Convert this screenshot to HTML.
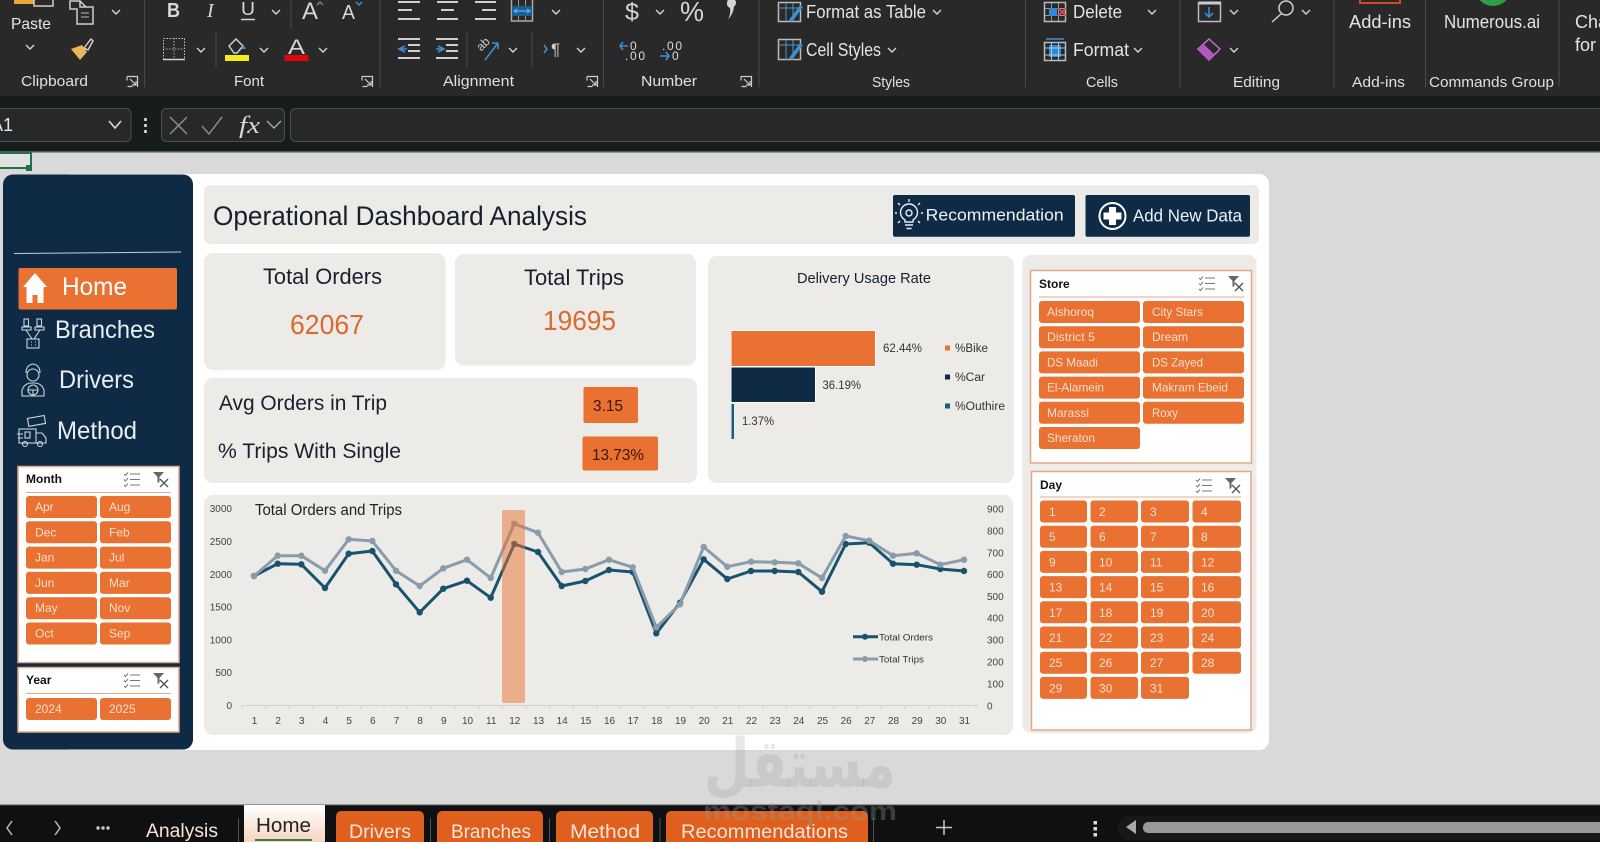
<!DOCTYPE html>
<html lang="en">
<head>
<meta charset="utf-8">
<title>Operational Dashboard Analysis</title>
<style>
html,body{margin:0;padding:0;width:1600px;height:842px;overflow:hidden;background:#d9d9d9}
svg{display:block;font-family:"Liberation Sans",Arial,sans-serif;filter:blur(.3px)}
.r{fill:#e4e4e4;font-size:15px}
.ic{fill:none;stroke:#cfcfcf;stroke-width:1.5}
.ch{fill:none;stroke:#d5d5d5;stroke-width:1.4}
.bl{fill:none;stroke:#3d8fd0;stroke-width:1.6}
.sep{stroke:#4a4a4a;stroke-width:1}
.sb{fill:#e97132}
.st{fill:#fbdfce;font-size:12px}
.sh{fill:#111;font-size:12px;font-weight:bold}
.ax{fill:#444;font-size:10px}
.tb{fill:#fbe3d6;font-size:19px}
</style>
</head>
<body>
<svg width="1600" height="842" viewBox="0 0 1600 842" xmlns="http://www.w3.org/2000/svg">
<defs>
<symbol id="chev" viewBox="0 0 10 6" width="10" height="6" overflow="visible"><path d="M1 1l4 4 4-4" class="ch"/></symbol>
<symbol id="lau" viewBox="0 0 11 11" width="11" height="11" overflow="visible"><path d="M0 .5h10.500v10.500M0 .5v4M.5 10.500h5M3 3l6 6M9 5v4H5" fill="none" stroke="#cfcfcf" stroke-width="1.2"/></symbol>
<symbol id="slic" viewBox="0 0 46 16" width="46" height="16" overflow="visible">
<path d="M6 2h10M6 7.500h10M6 13h10M0 2l1.500 1.500L4 .5M0 7.500l1.500 1.500L4 6M0 13l1.500 1.500L4 11.500" fill="none" stroke="#777" stroke-width="1"/>
<path d="M29 0h11l-4.500 5v5l-2 1V5z" fill="#666"/>
<path d="M36 7l8 8M44 7l-8 8" stroke="#555" stroke-width="1.400"/>
</symbol>
<marker id="mo" markerUnits="userSpaceOnUse" markerWidth="8" markerHeight="8" refX="4" refY="4"><circle cx="4" cy="4" r="3.200" fill="#18536e"/></marker>
<marker id="mt" markerUnits="userSpaceOnUse" markerWidth="8" markerHeight="8" refX="4" refY="4"><circle cx="4" cy="4" r="3.200" fill="#8a9bab"/></marker>
<linearGradient id="hm" x1="0" y1="0" x2="0" y2="1"><stop offset="0" stop-color="#fff"/><stop offset="1" stop-color="#f6d5c0"/></linearGradient>
</defs>

<!-- sheet background -->
<rect width="1600" height="842" fill="#d9d9d9"/>

<!-- ribbon -->
<rect width="1600" height="96" fill="#292929"/>
<rect y="96" width="1600" height="56" fill="#171c1d"/>
<rect y="151" width="1600" height="1.500" fill="#555"/>

<g class="sep">
<path d="M144.500 0v87M380 0v87M603.500 0v87M759 0v87M1025.500 0v87M1180 0v87M1334 0v87M1425.500 0v87M1559 0v87M291 0v29M216 32v35M467 32v35M532 32v35"/>
</g>

<!-- clipboard -->
<rect x="14" y="-6" width="20" height="10" fill="#eba83a"/>
<rect x="34" y="-6" width="19" height="12" fill="none" stroke="#cfcfcf" stroke-width="1.500"/>
<text x="11" y="29" font-size="16" fill="#e6e6e6" textLength="40" lengthAdjust="spacingAndGlyphs">Paste</text>
<use href="#chev" x="25" y="44"/>
<path d="M70 1h10l6 6h7v17H77V9h-7z M80 1v6h6" class="ic"/>
<path d="M81 13h8M81 17h8" stroke="#bbb" stroke-width="1"/>
<use href="#chev" x="111" y="9"/>
<path d="M84 48l7-9 2 2-5 9z" fill="none" stroke="#d8d8d8" stroke-width="1.400"/>
<path d="M71 49l11-4 5 7-7 8z" fill="#eab45a"/>
<text x="21" y="86" font-size="15" fill="#e0e0e0" textLength="67" lengthAdjust="spacingAndGlyphs">Clipboard</text>
<use href="#lau" x="127" y="76"/>

<!-- font -->
<text x="167" y="17" font-size="20" font-weight="bold" fill="#d8d8d8" textLength="13" lengthAdjust="spacingAndGlyphs">B</text>
<text x="207" y="17" font-size="20" font-style="italic" font-family="Liberation Serif" fill="#d8d8d8">I</text>
<text x="241" y="15" font-size="18" fill="#d8d8d8" textLength="14" lengthAdjust="spacingAndGlyphs">U</text>
<path d="M241 19.500h14" stroke="#d8d8d8" stroke-width="1.500"/>
<use href="#chev" x="271" y="9"/>
<text x="302" y="19" font-size="24" fill="#d8d8d8" textLength="16" lengthAdjust="spacingAndGlyphs">A</text>
<path d="M317 5l3-3 3 3" fill="none" stroke="#3d8fd0" stroke-width="1.500"/>
<text x="342" y="19" font-size="20" fill="#d8d8d8" textLength="13" lengthAdjust="spacingAndGlyphs">A</text>
<path d="M356 2l3 3 3-3" fill="none" stroke="#3d8fd0" stroke-width="1.500"/>
<rect x="163.500" y="38.500" width="21" height="21" fill="none" stroke="#c8c8c8" stroke-width="1" stroke-dasharray="1.500 1.500"/>
<path d="M174 38v21M163 49h21" stroke="#aaa" stroke-width="1" stroke-dasharray="1.500 1.500"/>
<path d="M163 59.500h22" stroke="#d5d5d5" stroke-width="1.500"/>
<use href="#chev" x="196" y="47"/>
<path d="M229 46l7-7 7 7-6 7h-3z" class="ic"/>
<path d="M243 44l3 5h-4z" fill="#3d8fd0"/>
<rect x="225" y="55" width="24" height="6" fill="#f4ec1b"/>
<use href="#chev" x="259" y="47"/>
<text x="288" y="54" font-size="21" fill="#d8d8d8" textLength="17" lengthAdjust="spacingAndGlyphs">A</text>
<rect x="284.500" y="55" width="24" height="6" fill="#e0060e"/>
<use href="#chev" x="318" y="47"/>
<text x="234" y="86" font-size="15" fill="#e0e0e0" textLength="30" lengthAdjust="spacingAndGlyphs">Font</text>
<use href="#lau" x="362" y="76"/>

<!-- alignment -->
<g stroke="#cfcfcf" stroke-width="2">
<path d="M398 2h22M398 10h14M398 19h22"/>
<path d="M437 2h21M441 10h13M437 19h21"/>
<path d="M475 2h21M482 10h14M475 19h21"/>
<path d="M398 39h22M408 45h12M408 51h12M398 58h22"/>
<path d="M436 39h22M446 45h12M446 51h12M436 58h22"/>
</g>
<rect x="511.500" y="-1" width="21" height="22" fill="none" stroke="#aaa" stroke-width="1.500"/>
<path d="M518.500 0v6M525.500 0v6M518.500 16v5M525.500 16v5" stroke="#999" stroke-width="1"/>
<rect x="512" y="6" width="20" height="10" fill="#1c5e8f"/>
<path d="M515 11h14M517 9l-3 2 3 2M527 9l3 2-3 2" fill="none" stroke="#5ab0ea" stroke-width="1.200"/>
<use href="#chev" x="551" y="9"/>
<path d="M405 46l-6 3 6 3M399 49h8" class="bl"/>
<path d="M438 46l6 3-6 3M436 49h8" class="bl"/>
<text x="478" y="48" font-size="12" fill="#cfcfcf" transform="rotate(-45 484 46)">ab</text>
<path d="M485 60l13-17M498 43h-6M498 43v6" class="bl"/>
<use href="#chev" x="508" y="47"/>
<path d="M544 45l3 4-3 4" class="bl"/>
<text x="551" y="55" font-size="17" fill="#cfcfcf">¶</text>
<use href="#chev" x="576" y="47"/>
<text x="443" y="86" font-size="15" fill="#e0e0e0" textLength="71" lengthAdjust="spacingAndGlyphs">Alignment</text>
<use href="#lau" x="587" y="76"/>

<!-- number -->
<text x="625" y="20" font-size="24" fill="#d5d5d5" textLength="14" lengthAdjust="spacingAndGlyphs">$</text>
<use href="#chev" x="655" y="9"/>
<text x="680" y="21" font-size="28" fill="#d5d5d5" textLength="24" lengthAdjust="spacingAndGlyphs">%</text>
<path d="M727 3a4.500 4.500 0 1 1 7 3.500q-.5 7-6 13q3-6 2-11.500a4.500 4.500 0 0 1-3-5z" fill="#d5d5d5"/>
<path d="M628 46h-8M623 42l-3 4 3 4" class="bl"/>
<text x="630" y="50" font-size="12" fill="#ddd">0</text>
<text x="625" y="60" font-size="12" fill="#ddd" textLength="20">.00</text>
<text x="662" y="50" font-size="12" fill="#ddd" textLength="20">.00</text>
<path d="M660 56h9M666 52l3 4-3 4" class="bl"/>
<text x="672" y="60" font-size="12" fill="#ddd">0</text>
<text x="641" y="86" font-size="15" fill="#e0e0e0" textLength="56" lengthAdjust="spacingAndGlyphs">Number</text>
<use href="#lau" x="741" y="76"/>

<!-- styles -->
<rect x="778.500" y="2.500" width="22" height="19" fill="none" stroke="#bbb" stroke-width="1.500"/>
<path d="M778 8h22M786 3v18M793 3v18" stroke="#4f96c9" stroke-width="1"/>
<path d="M789 20l11-15 3 2-11 15z" fill="#3d8fd0"/>
<rect x="778.500" y="39.500" width="22" height="20" fill="none" stroke="#bbb" stroke-width="1.500"/>
<path d="M778 45h22M786 40v20M793 40v20" stroke="#4f96c9" stroke-width="1"/>
<path d="M789 58l11-15 3 2-11 15z" fill="#3d8fd0"/>
<text x="806" y="18" class="r" font-size="17" textLength="120" lengthAdjust="spacingAndGlyphs" style="font-size:18px">Format as Table</text>
<use href="#chev" x="932" y="9"/>
<text x="806" y="56" class="r" textLength="75" lengthAdjust="spacingAndGlyphs" style="font-size:18px">Cell Styles</text>
<use href="#chev" x="887" y="47"/>
<text x="872" y="87" font-size="15" fill="#e0e0e0" textLength="38" lengthAdjust="spacingAndGlyphs">Styles</text>

<!-- cells -->
<rect x="1044.500" y="2.500" width="21" height="19" fill="none" stroke="#bbb" stroke-width="1.500"/>
<path d="M1051.500 3v18M1058.500 3v18M1045 8.500h20M1045 15.500h20" stroke="#999" stroke-width="1"/>
<rect x="1049" y="8" width="8" height="8" fill="#2d8ad8"/>
<path d="M1058 8l8 8M1066 8l-8 8" stroke="#e14b4b" stroke-width="1.600"/>
<text x="1073" y="18" class="r" textLength="49" lengthAdjust="spacingAndGlyphs" style="font-size:18px">Delete</text>
<use href="#chev" x="1147" y="9"/>
<rect x="1044.500" y="42.500" width="21" height="18" fill="none" stroke="#bbb" stroke-width="1.500"/>
<rect x="1049" y="45" width="12" height="12" fill="#2d8ad8"/>
<path d="M1051.500 43v17M1058.500 43v17M1045 48h20M1045 55h20" stroke="#a9c8e4" stroke-width="1"/>
<path d="M1046 39h18" stroke="#3d8fd0" stroke-width="1.500"/>
<text x="1073" y="56" class="r" textLength="56" lengthAdjust="spacingAndGlyphs" style="font-size:18px">Format</text>
<use href="#chev" x="1133" y="47"/>
<text x="1086" y="87" font-size="15" fill="#e0e0e0" textLength="32" lengthAdjust="spacingAndGlyphs">Cells</text>

<!-- editing -->
<rect x="1198.500" y="2.500" width="22" height="19" fill="none" stroke="#bbb" stroke-width="1.500"/>
<path d="M1199 3h22" stroke="#ccc" stroke-width="3"/>
<path d="M1209 7v10M1205 13l4 4 4-4" class="bl"/>
<use href="#chev" x="1229" y="9"/>
<circle cx="1286" cy="8" r="7" class="ic"/>
<path d="M1281 14l-9 8" class="ic"/>
<use href="#chev" x="1301" y="9"/>
<path d="M1209 39l11 10-11 11-11-11z" fill="none" stroke="#c86dd6" stroke-width="1.500"/>
<path d="M1198 49l5.500-5 11 10.500-5.500 5.500z" fill="#b754c4"/>
<use href="#chev" x="1229" y="47"/>
<text x="1233" y="87" font-size="15" fill="#e0e0e0" textLength="47" lengthAdjust="spacingAndGlyphs">Editing</text>

<!-- add-ins etc -->
<rect x="1360" y="-6" width="40" height="9" fill="none" stroke="#d24a26" stroke-width="2"/>
<text x="1349" y="28" class="r" textLength="62" lengthAdjust="spacingAndGlyphs" style="font-size:18px">Add-ins</text>
<text x="1352" y="87" font-size="15" fill="#e0e0e0" textLength="53" lengthAdjust="spacingAndGlyphs">Add-ins</text>
<circle cx="1493" cy="-12" r="18" fill="#2e9e48"/>
<text x="1444" y="28" class="r" textLength="96" lengthAdjust="spacingAndGlyphs" style="font-size:18px">Numerous.ai</text>
<text x="1429" y="87" font-size="15" fill="#e0e0e0" textLength="125" lengthAdjust="spacingAndGlyphs">Commands Group</text>
<text x="1575" y="28" class="r" style="font-size:18px">Cha</text>
<text x="1575" y="51" class="r" style="font-size:18px">for</text>

<!-- formula bar -->
<rect x="-10" y="108.500" width="141" height="33" rx="5" fill="#262829" stroke="#4c4e4f"/>
<text x="-9" y="131" font-size="18" fill="#e6e6e6">A1</text>
<path d="M109 121l6 7 6-7" class="ch" style="stroke-width:1.700"/>
<path d="M145.500 118v3M145.500 124v3M145.500 130v3" stroke="#ddd" stroke-width="2.600"/>
<rect x="161.500" y="108.500" width="123" height="33" rx="5" fill="#262829" stroke="#4c4e4f"/>
<path d="M170 117l17 17M187 117l-17 17" stroke="#8a8a8a" stroke-width="1.500"/>
<path d="M202 126l7 8 13-17" fill="none" stroke="#8a8a8a" stroke-width="1.500"/>
<text x="239" y="133" font-size="24" font-style="italic" font-family="Liberation Serif" fill="#d8d8d8" textLength="21" lengthAdjust="spacingAndGlyphs">fx</text>
<path d="M267 121l7 7 7-7" fill="none" stroke="#aaa" stroke-width="1.400"/>
<rect x="290.500" y="108.500" width="1320" height="33" rx="5" fill="#262829" stroke="#4c4e4f"/>

<!-- active cell -->
<rect x="-4" y="153" width="35" height="15" fill="#e2e2e2" stroke="#24704a" stroke-width="2"/>
<rect x="26" y="165" width="6" height="6" fill="#24704a"/>

<!-- white panel -->
<rect x="60" y="174" width="1209" height="576" rx="10" fill="#fff"/>

<!-- sidebar -->
<rect x="3" y="174.500" width="190" height="575" rx="10" fill="#0f2a45"/>
<path d="M14 253.500L181 252" stroke="#c9ced4" stroke-width="1"/>
<rect x="18.500" y="268" width="158.500" height="41.500" rx="2" fill="#e97132"/>
<path d="M35 273l12 14h-3.500v16h-6v-8h-5v8h-6v-16H23z" fill="#fff"/>
<text x="62" y="295" font-size="25" fill="#fff" textLength="65" lengthAdjust="spacingAndGlyphs">Home</text>
<text x="55" y="338" font-size="25" fill="#e8eef3" textLength="100" lengthAdjust="spacingAndGlyphs">Branches</text>
<text x="59" y="388" font-size="25" fill="#e8eef3" textLength="75" lengthAdjust="spacingAndGlyphs">Drivers</text>
<text x="57" y="439" font-size="25" fill="#e8eef3" textLength="80" lengthAdjust="spacingAndGlyphs">Method</text>
<!-- branches icon -->
<g fill="none" stroke="#cfd6dd" stroke-width="1.100">
<rect x="24" y="319" width="4.500" height="7"/><rect x="37" y="319" width="4.500" height="7"/>
<path d="M22 327h9v3h-9zM35 327h9v3h-9zM26 330l6 9M40 330l-6 9"/>
<rect x="27" y="339" width="12" height="9"/>
<path d="M31 342h1M35 342h1M31 345h1M35 345h1"/>
<!-- drivers icon -->
<circle cx="33" cy="375" r="6"/>
<path d="M26 373q0-8 7-9 7 1 7 9"/>
<path d="M22 396v-6q2-6 8-7h6q6 1 8 7v6z"/>
<circle cx="33" cy="390" r="5"/>
<path d="M28 390h10M33 390v5"/>
<!-- method icon -->
<rect x="28" y="417" width="17" height="8" transform="rotate(-10 36 421)"/>
<rect x="19" y="429" width="17" height="14"/>
<path d="M36 433h6l4 5v5H36M17 434h6M18 438h5"/>
<circle cx="25" cy="444" r="2.500"/><circle cx="40" cy="444" r="2.500"/>
<rect x="25" y="432" width="5" height="6"/>
</g>

<!-- month slicer -->
<rect x="18" y="466.500" width="161" height="196" fill="#fff" stroke="#e4a786" stroke-width="1.500"/>
<text x="26" y="483" class="sh">Month</text>
<use href="#slic" x="124" y="472"/>
<path d="M26 492.500h145" stroke="#e9a985" stroke-width="1"/>
<g class="sb">
<rect x="26" y="496" width="71" height="22" rx="3"/><rect x="100" y="496" width="71" height="22" rx="3"/>
<rect x="26" y="521.300" width="71" height="22" rx="3"/><rect x="100" y="521.300" width="71" height="22" rx="3"/>
<rect x="26" y="546.600" width="71" height="22" rx="3"/><rect x="100" y="546.600" width="71" height="22" rx="3"/>
<rect x="26" y="571.900" width="71" height="22" rx="3"/><rect x="100" y="571.900" width="71" height="22" rx="3"/>
<rect x="26" y="597.200" width="71" height="22" rx="3"/><rect x="100" y="597.200" width="71" height="22" rx="3"/>
<rect x="26" y="622.500" width="71" height="22" rx="3"/><rect x="100" y="622.500" width="71" height="22" rx="3"/>
</g>
<g class="st">
<text x="35" y="511">Apr</text><text x="109" y="511">Aug</text>
<text x="35" y="536.300">Dec</text><text x="109" y="536.300">Feb</text>
<text x="35" y="561.600">Jan</text><text x="109" y="561.600">Jul</text>
<text x="35" y="586.900">Jun</text><text x="109" y="586.900">Mar</text>
<text x="35" y="612.200">May</text><text x="109" y="612.200">Nov</text>
<text x="35" y="637.500">Oct</text><text x="109" y="637.500">Sep</text>
</g>

<!-- year slicer -->
<rect x="18" y="667.500" width="161" height="64.500" fill="#fff" stroke="#e4a786" stroke-width="1.500"/>
<text x="26" y="684" class="sh">Year</text>
<use href="#slic" x="124" y="673"/>
<path d="M26 693.500h145" stroke="#e9a985" stroke-width="1"/>
<rect x="26" y="698" width="71" height="22" rx="3" class="sb"/><rect x="100" y="698" width="71" height="22" rx="3" class="sb"/>
<text x="35" y="713" class="st">2024</text><text x="109" y="713" class="st">2025</text>

<!-- title bar -->
<rect x="204" y="185" width="1055" height="59" rx="6" fill="#edebe8"/>
<text x="213" y="225" font-size="27" fill="#17202e" textLength="374" lengthAdjust="spacingAndGlyphs">Operational Dashboard Analysis</text>
<rect x="893" y="195" width="182" height="41.700" rx="2" fill="#0f2a45"/>
<rect x="1085.500" y="195" width="164.500" height="41.700" rx="2" fill="#0f2a45"/>
<text x="925.700" y="220.700" font-size="17" fill="#eef2f5" textLength="138" lengthAdjust="spacingAndGlyphs">Recommendation</text>
<text x="1133" y="221.500" font-size="17.500" fill="#eef2f5" textLength="109" lengthAdjust="spacingAndGlyphs">Add New Data</text>
<circle cx="1112.500" cy="216" r="13" fill="#0f2a45" stroke="#fff" stroke-width="2"/>
<path d="M1109 207h7v5.500h5.500v7H1116v5.500h-7v-5.500h-5.500v-7h5.500z" fill="#fff"/>
<!-- bulb -->
<g fill="none" stroke="#e8edf2" stroke-width="1.400">
<path d="M905 222v-2q-4.500-3-4.500-7.500a8.500 8.500 0 0 1 17 0q0 4.500-4.500 7.500v2z"/>
<circle cx="909" cy="213" r="3"/>
<path d="M905 225h8M906.500 228.500h5M909 199v3M898 203l2 2M920 203l-2 2M895 213h2M921 213h2M898 223l2-2M920 223l-2-2"/>
</g>

<!-- total orders -->
<rect x="204" y="253" width="241.600" height="117" rx="9" fill="#edebe8"/>
<text x="263" y="284" font-size="22" fill="#17202e" textLength="119" lengthAdjust="spacingAndGlyphs">Total Orders</text>
<text x="290" y="334" font-size="28" fill="#d96a31" textLength="74" lengthAdjust="spacingAndGlyphs">62067</text>
<!-- total trips -->
<rect x="455" y="254" width="241" height="111.500" rx="9" fill="#edebe8"/>
<text x="524" y="285" font-size="22" fill="#17202e" textLength="100" lengthAdjust="spacingAndGlyphs">Total Trips</text>
<text x="543" y="330" font-size="28" fill="#d96a31" textLength="73" lengthAdjust="spacingAndGlyphs">19695</text>
<!-- avg card -->
<rect x="204" y="378" width="493" height="105" rx="9" fill="#edebe8"/>
<text x="219" y="410" font-size="21" fill="#17202e" textLength="168" lengthAdjust="spacingAndGlyphs">Avg Orders in Trip</text>
<text x="218" y="458" font-size="21" fill="#17202e" textLength="183" lengthAdjust="spacingAndGlyphs">% Trips With Single</text>
<rect x="583.500" y="387" width="54.500" height="36" rx="2" fill="#e97132"/>
<text x="593" y="411" font-size="15.500" fill="#3a1606" textLength="30" lengthAdjust="spacingAndGlyphs">3.15</text>
<rect x="582.500" y="436.500" width="75.500" height="34" rx="2" fill="#e97132"/>
<text x="592" y="460" font-size="15.500" fill="#3a1606" textLength="52" lengthAdjust="spacingAndGlyphs">13.73%</text>

<!-- delivery card -->
<rect x="708" y="256" width="306" height="227" rx="9" fill="#edebe8"/>
<text x="797" y="283" font-size="14.500" fill="#17202e" textLength="134" lengthAdjust="spacingAndGlyphs">Delivery Usage Rate</text>
<rect x="731" y="330" width="145" height="37" fill="#fff"/>
<rect x="731" y="366.500" width="85" height="36.500" fill="#fff"/>
<rect x="731.500" y="331" width="143.500" height="35" fill="#e97132"/>
<rect x="731.500" y="367.500" width="83.500" height="34.500" fill="#0f2a45"/>
<rect x="731.500" y="404" width="2.500" height="35" fill="#156082"/>
<g font-size="11.500" fill="#333">
<text x="883" y="352" textLength="39" lengthAdjust="spacingAndGlyphs">62.44%</text>
<text x="822.500" y="389" textLength="38.500" lengthAdjust="spacingAndGlyphs">36.19%</text>
<text x="742" y="425" textLength="32" lengthAdjust="spacingAndGlyphs">1.37%</text>
<text x="955" y="352" textLength="33" lengthAdjust="spacingAndGlyphs">%Bike</text>
<text x="955" y="381" textLength="30" lengthAdjust="spacingAndGlyphs">%Car</text>
<text x="955" y="410" textLength="50" lengthAdjust="spacingAndGlyphs">%Outhire</text>
</g>
<rect x="945" y="345.500" width="5" height="5" fill="#e97132"/>
<rect x="945" y="374.500" width="5" height="5" fill="#0f2a45"/>
<rect x="945" y="403.500" width="5" height="5" fill="#156082"/>

<!-- slicer panel -->
<rect x="1022.500" y="255" width="234" height="478" rx="8" fill="#edebe8"/>
<!-- store -->
<rect x="1030.500" y="270.500" width="221" height="192.500" fill="#fff" stroke="#e4a786" stroke-width="1.500"/>
<text x="1039" y="288" class="sh">Store</text>
<use href="#slic" x="1199" y="276"/>
<path d="M1039 297h205" stroke="#e9a985" stroke-width="1"/>
<g class="sb">
<rect x="1039" y="301" width="101" height="22" rx="3"/><rect x="1143" y="301" width="101" height="22" rx="3"/>
<rect x="1039" y="326.200" width="101" height="22" rx="3"/><rect x="1143" y="326.200" width="101" height="22" rx="3"/>
<rect x="1039" y="351.400" width="101" height="22" rx="3"/><rect x="1143" y="351.400" width="101" height="22" rx="3"/>
<rect x="1039" y="376.600" width="101" height="22" rx="3"/><rect x="1143" y="376.600" width="101" height="22" rx="3"/>
<rect x="1039" y="401.800" width="101" height="22" rx="3"/><rect x="1143" y="401.800" width="101" height="22" rx="3"/>
<rect x="1039" y="427" width="101" height="22" rx="3"/>
</g>
<g class="st">
<text x="1047" y="316" textLength="47" lengthAdjust="spacingAndGlyphs">Alshoroq</text><text x="1152" y="316" textLength="51" lengthAdjust="spacingAndGlyphs">City Stars</text>
<text x="1047" y="341.200" textLength="48" lengthAdjust="spacingAndGlyphs">District 5</text><text x="1152" y="341.200" textLength="36" lengthAdjust="spacingAndGlyphs">Dream</text>
<text x="1047" y="366.400" textLength="51" lengthAdjust="spacingAndGlyphs">DS Maadi</text><text x="1152" y="366.400" textLength="51" lengthAdjust="spacingAndGlyphs">DS Zayed</text>
<text x="1047" y="391.600" textLength="57" lengthAdjust="spacingAndGlyphs">El-Alamein</text><text x="1152" y="391.600" textLength="76" lengthAdjust="spacingAndGlyphs">Makram Ebeid</text>
<text x="1047" y="416.800" textLength="42" lengthAdjust="spacingAndGlyphs">Marassi</text><text x="1152" y="416.800" textLength="26" lengthAdjust="spacingAndGlyphs">Roxy</text>
<text x="1047" y="442" textLength="48" lengthAdjust="spacingAndGlyphs">Sheraton</text>
</g>
<!-- day -->
<rect x="1031.500" y="471.500" width="219.500" height="258.500" fill="#fff" stroke="#e4a786" stroke-width="1.500"/>
<text x="1040" y="489" class="sh">Day</text>
<use href="#slic" x="1196" y="478"/>
<path d="M1040 497h201" stroke="#e9a985" stroke-width="1"/>
<g class="sb">
<rect x="1040" y="500.500" width="47" height="22" rx="3"/><rect x="1090.500" y="500.500" width="47.500" height="22" rx="3"/><rect x="1141" y="500.500" width="48" height="22" rx="3"/><rect x="1192.500" y="500.500" width="48.500" height="22" rx="3"/>
<rect x="1040" y="525.700" width="47" height="22" rx="3"/><rect x="1090.500" y="525.700" width="47.500" height="22" rx="3"/><rect x="1141" y="525.700" width="48" height="22" rx="3"/><rect x="1192.500" y="525.700" width="48.500" height="22" rx="3"/>
<rect x="1040" y="550.900" width="47" height="22" rx="3"/><rect x="1090.500" y="550.900" width="47.500" height="22" rx="3"/><rect x="1141" y="550.900" width="48" height="22" rx="3"/><rect x="1192.500" y="550.900" width="48.500" height="22" rx="3"/>
<rect x="1040" y="576.100" width="47" height="22" rx="3"/><rect x="1090.500" y="576.100" width="47.500" height="22" rx="3"/><rect x="1141" y="576.100" width="48" height="22" rx="3"/><rect x="1192.500" y="576.100" width="48.500" height="22" rx="3"/>
<rect x="1040" y="601.300" width="47" height="22" rx="3"/><rect x="1090.500" y="601.300" width="47.500" height="22" rx="3"/><rect x="1141" y="601.300" width="48" height="22" rx="3"/><rect x="1192.500" y="601.300" width="48.500" height="22" rx="3"/>
<rect x="1040" y="626.500" width="47" height="22" rx="3"/><rect x="1090.500" y="626.500" width="47.500" height="22" rx="3"/><rect x="1141" y="626.500" width="48" height="22" rx="3"/><rect x="1192.500" y="626.500" width="48.500" height="22" rx="3"/>
<rect x="1040" y="651.700" width="47" height="22" rx="3"/><rect x="1090.500" y="651.700" width="47.500" height="22" rx="3"/><rect x="1141" y="651.700" width="48" height="22" rx="3"/><rect x="1192.500" y="651.700" width="48.500" height="22" rx="3"/>
<rect x="1040" y="676.900" width="47" height="22" rx="3"/><rect x="1090.500" y="676.900" width="47.500" height="22" rx="3"/><rect x="1141" y="676.900" width="48" height="22" rx="3"/>
</g>
<g class="st">
<text x="1049" y="516">1</text><text x="1099" y="516">2</text><text x="1150" y="516">3</text><text x="1201" y="516">4</text>
<text x="1049" y="541.200">5</text><text x="1099" y="541.200">6</text><text x="1150" y="541.200">7</text><text x="1201" y="541.200">8</text>
<text x="1049" y="566.400">9</text><text x="1099" y="566.400">10</text><text x="1150" y="566.400">11</text><text x="1201" y="566.400">12</text>
<text x="1049" y="591.600">13</text><text x="1099" y="591.600">14</text><text x="1150" y="591.600">15</text><text x="1201" y="591.600">16</text>
<text x="1049" y="616.800">17</text><text x="1099" y="616.800">18</text><text x="1150" y="616.800">19</text><text x="1201" y="616.800">20</text>
<text x="1049" y="642">21</text><text x="1099" y="642">22</text><text x="1150" y="642">23</text><text x="1201" y="642">24</text>
<text x="1049" y="667.200">25</text><text x="1099" y="667.200">26</text><text x="1150" y="667.200">27</text><text x="1201" y="667.200">28</text>
<text x="1049" y="692.400">29</text><text x="1099" y="692.400">30</text><text x="1150" y="692.400">31</text>
</g>

<!-- chart card -->
<rect x="204" y="495" width="809" height="240" rx="9" fill="#edebe8"/>
<text x="255" y="515" font-size="15.500" fill="#222" textLength="147" lengthAdjust="spacingAndGlyphs">Total Orders and Trips</text>
<g class="ax" text-anchor="end">
<text x="232" y="512">3000</text><text x="232" y="545">2500</text><text x="232" y="577.800">2000</text><text x="232" y="610.600">1500</text><text x="232" y="643.400">1000</text><text x="232" y="676.200">500</text><text x="232" y="709">0</text>
</g>
<g class="ax">
<text x="987" y="512.500">900</text><text x="987" y="534.500">800</text><text x="987" y="556.500">700</text><text x="987" y="578">600</text><text x="987" y="600">500</text><text x="987" y="621.500">400</text><text x="987" y="643.500">300</text><text x="987" y="665.500">200</text><text x="987" y="687.500">100</text><text x="987" y="709.500">0</text>
</g>
<path d="M242 705.500h736" stroke="#d2d0cd" stroke-width="1"/>
<path d="M242 705v4M265.700 705v4M289.300 705v4M313 705v4M336.700 705v4M360.300 705v4M384 705v4M407.700 705v4M431.300 705v4M455 705v4M478.700 705v4M502.300 705v4M526 705v4M549.700 705v4M573.300 705v4M597 705v4M620.700 705v4M644.300 705v4M668 705v4M691.700 705v4M715.300 705v4M739 705v4M762.700 705v4M786.300 705v4M810 705v4M833.700 705v4M857.300 705v4M881 705v4M904.700 705v4M928.300 705v4M952 705v4M976 705v4" stroke="#d2d0cd" stroke-width="1"/>
<g class="ax" text-anchor="middle">
<text x="254.500" y="724">1</text><text x="278.200" y="724">2</text><text x="301.800" y="724">3</text><text x="325.500" y="724">4</text><text x="349.200" y="724">5</text><text x="372.800" y="724">6</text><text x="396.500" y="724">7</text><text x="420.200" y="724">8</text><text x="443.800" y="724">9</text><text x="467.500" y="724">10</text><text x="491.200" y="724">11</text><text x="514.800" y="724">12</text><text x="538.500" y="724">13</text><text x="562.200" y="724">14</text><text x="585.800" y="724">15</text><text x="609.500" y="724">16</text><text x="633.200" y="724">17</text><text x="656.800" y="724">18</text><text x="680.500" y="724">19</text><text x="704.200" y="724">20</text><text x="727.800" y="724">21</text><text x="751.500" y="724">22</text><text x="775.200" y="724">23</text><text x="798.800" y="724">24</text><text x="822.500" y="724">25</text><text x="846.200" y="724">26</text><text x="869.800" y="724">27</text><text x="893.500" y="724">28</text><text x="917.200" y="724">29</text><text x="940.800" y="724">30</text><text x="964.500" y="724">31</text>
</g>
<polyline fill="none" stroke="#18536e" stroke-width="3" stroke-linejoin="round" marker-start="url(#mo)" marker-mid="url(#mo)" marker-end="url(#mo)"
points="254,576 277.700,563.700 301.300,564.300 325,588 348.700,553.700 372.300,551 396,584.300 419.700,612.300 443.300,588.700 467,580.700 490.700,597.700 514.300,544 538,552 561.700,586 585.300,581 609,570 632.700,572 656.300,633.300 680,602.700 703.700,559.300 727.300,579 751,571 774.700,571 798.300,572 822,591.700 845.700,544 869.300,542.700 893,563.700 916.700,564.700 940.300,569 964,571"/>
<polyline fill="none" stroke="#8a9bab" stroke-width="3" stroke-linejoin="round" marker-start="url(#mt)" marker-mid="url(#mt)" marker-end="url(#mt)"
points="254,576 277.700,555.700 301.300,555.700 325,570.700 348.700,539.300 372.300,541 396,570.700 419.700,586 443.300,568.300 467,559.700 490.700,578 514.300,523.700 538,532.700 561.700,572 585.300,569 609,559.700 632.700,567.300 656.300,627.300 680,604.300 703.700,547 727.300,566.700 751,561.700 774.700,562.300 798.300,563.300 822,578 845.700,536 869.300,540.700 893,555.700 916.700,553.300 940.300,564.700 964,559.700"/>
<rect x="502" y="510" width="23" height="193" rx="1.500" fill="#e97132" fill-opacity=".5"/>
<path d="M853 636.700h25" stroke="#18536e" stroke-width="3"/><circle cx="865" cy="636.700" r="3" fill="#18536e"/>
<path d="M853 659h25" stroke="#8a9bab" stroke-width="3"/><circle cx="865" cy="659" r="3" fill="#8a9bab"/>
<text x="879" y="640.500" font-size="9.500" fill="#333" textLength="54" lengthAdjust="spacingAndGlyphs">Total Orders</text>
<text x="879" y="662.500" font-size="9.500" fill="#333" textLength="45" lengthAdjust="spacingAndGlyphs">Total Trips</text>

<!-- bottom bar -->
<rect y="805" width="1600" height="37" fill="#0f1011"/>
<rect y="804.500" width="1600" height="1" fill="#555"/>
<path d="M12 821l-5 7 5 7M55 821l5 7-5 7" fill="none" stroke="#bdbdbd" stroke-width="1.500"/>
<circle cx="98" cy="828" r="1.700" fill="#ccc"/><circle cx="103" cy="828" r="1.700" fill="#ccc"/><circle cx="108" cy="828" r="1.700" fill="#ccc"/>
<text x="146" y="837" class="tb" textLength="72" lengthAdjust="spacingAndGlyphs">Analysis</text>
<path d="M238.500 818v24" stroke="#555"/>
<rect x="244" y="805" width="81" height="37" fill="url(#hm)"/>
<text x="256" y="832" font-size="20" fill="#222" textLength="55" lengthAdjust="spacingAndGlyphs">Home</text>
<rect x="255" y="839" width="57" height="2" fill="#3f7a44"/>
<rect x="336" y="811" width="88" height="36" rx="5" fill="#de5f1e"/>
<text x="349" y="838" class="tb" textLength="62" lengthAdjust="spacingAndGlyphs">Drivers</text>
<path d="M430.500 818v24M549.500 818v24M660 818v24M873.500 818v24" stroke="#555"/>
<rect x="437" y="811" width="106" height="36" rx="5" fill="#de5f1e"/>
<text x="451" y="838" class="tb" textLength="80" lengthAdjust="spacingAndGlyphs">Branches</text>
<rect x="556" y="811" width="97" height="36" rx="5" fill="#de5f1e"/>
<text x="570" y="838" class="tb" textLength="70" lengthAdjust="spacingAndGlyphs">Method</text>
<rect x="666" y="811" width="202" height="36" rx="5" fill="#de5f1e"/>
<text x="681" y="838" class="tb" textLength="167" lengthAdjust="spacingAndGlyphs">Recommendations</text>
<path d="M944 820v15M936 827.500h16" stroke="#c8c8c8" stroke-width="1.500"/>
<rect x="1093.500" y="821" width="3.500" height="3.500" fill="#ddd"/><rect x="1093.500" y="827" width="3.500" height="3.500" fill="#ddd"/><rect x="1093.500" y="833" width="3.500" height="3.500" fill="#ddd"/>
<rect x="1118" y="816" width="490" height="24" rx="10" fill="#181819"/>
<path d="M1136 820v14l-10-7z" fill="#aaa"/>
<rect x="1143" y="822" width="470" height="11" rx="5" fill="#999"/>

<!-- watermark -->
<text x="800" y="787" text-anchor="middle" font-family="DejaVu Sans, sans-serif" font-weight="bold" font-size="68" fill="#8c8c8c" fill-opacity=".2" textLength="192" lengthAdjust="spacingAndGlyphs">مستقل</text>
<text x="703" y="820" font-size="27" font-weight="bold" fill="#9a9a9a" fill-opacity=".32" textLength="194" lengthAdjust="spacingAndGlyphs">mostaql.com</text>
</svg>
</body>
</html>
